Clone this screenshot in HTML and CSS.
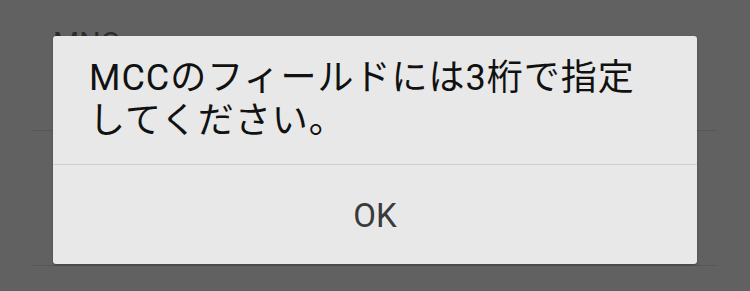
FILE: index.html
```html
<!DOCTYPE html>
<html lang="ja">
<head>
<meta charset="utf-8">
<link rel="stylesheet" href="styles.css">
</head>
<body>
<div class="screen">
  <div class="list">
    <div class="row">
      <div class="row-title">MNC</div>
      <div class="row-value">10</div>
    </div>
    <div class="row">
      <div class="row-title">認証タイプ</div>
      <div class="row-value">未設定</div>
    </div>
  </div>
  <div class="dialog">
    <div class="message">MCCのフィールドには3桁で指定<br>してください。</div>
    <div class="actions">
      <div class="btn">OK</div>
    </div>
  </div>
</div>
</body>
</html>
```
FILE: styles.css
```css
html, body {
  margin: 0;
  padding: 0;
}
body {
  background: #616161;
  font-family: "Roboto", "Noto Sans CJK JP", sans-serif;
}
.screen {
  position: relative;
  width: 750px;
  height: 291px;
  overflow: hidden;
  background: #616161;
}
.list {
  margin-left: 33px;
  width: 684px;
}
.row {
  height: 134px;
  border-bottom: 1px solid #565656;
  padding-left: 20px;
  margin-top: -4px;
}
.row + .row {
  margin-top: 0;
}
.row-title {
  padding-top: 30px;
  font-size: 30px;
  line-height: 34px;
  color: #2c2c2c;
}
.row-value {
  padding-top: 16px;
  font-size: 26px;
  line-height: 30px;
  color: #3a3a3a;
}
.dialog {
  position: absolute;
  left: 53px;
  top: 36px;
  width: 644px;
  height: 228px;
  background: #e8e8e8;
  border-radius: 3px;
  box-shadow: 0 1px 2px rgba(0, 0, 0, 0.35);
  display: flex;
  flex-direction: column;
}
.message {
  height: 129px;
  box-sizing: border-box;
  padding: 21px 20px 0 36px;
  font-size: 36px;
  line-height: 43px;
  letter-spacing: 1px;
  color: #111111;
  border-bottom: 1px solid #cfcfcf;
}
.actions {
  flex: 1;
  display: flex;
  align-items: center;
  justify-content: center;
}
.btn {
  font-size: 33px;
  line-height: 40px;
  color: #3a3a3a;
  padding-top: 2px;
}
```
